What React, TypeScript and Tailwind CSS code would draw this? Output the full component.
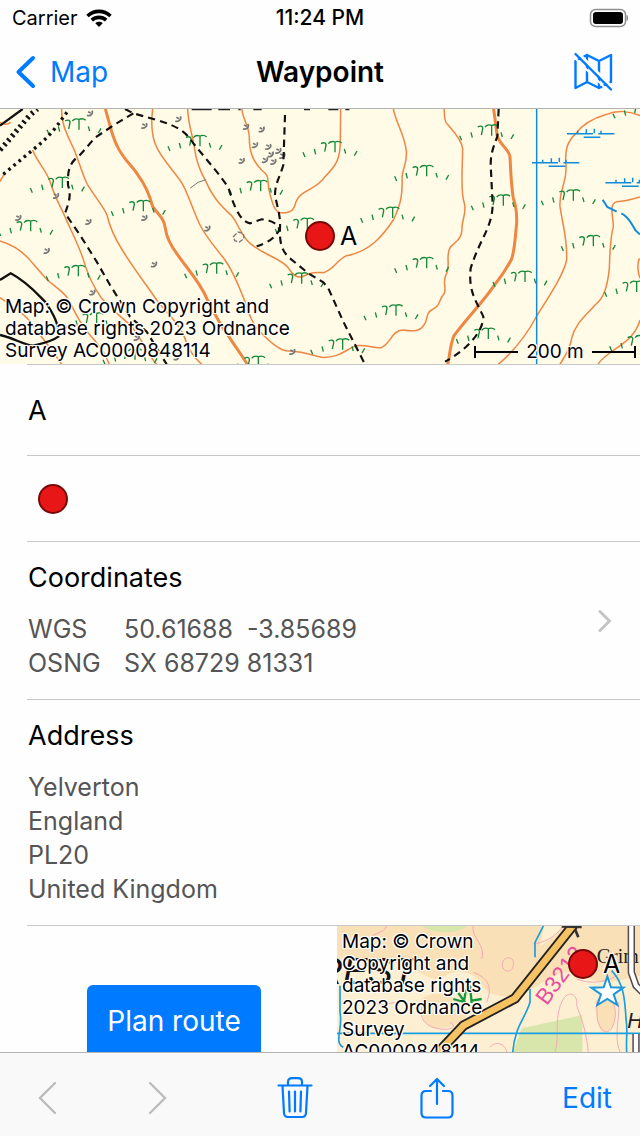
import type { ReactNode } from 'react'

const HALO =
  '[text-shadow:0_0_2px_#fff,0_0_2px_#fff,1px_1px_0_#fff,-1px_-1px_0_#fff,1px_-1px_0_#fff,-1px_1px_0_#fff]'

const contours = [
  'M185 12C183 60 205 95 225 140C240 180 250 215 262 238C285 275 310 305 321 330C330 370 345 400 365 432C400 490 440 540 470 585C500 625 545 660 560 715C570 740 590 765 605 778',
  'M98 135C110 170 140 195 152 235C165 280 185 310 197 340C215 380 235 420 247 455C260 500 275 540 305 580C335 615 370 640 392 662C420 690 440 745 470 778',
  'M0 408C40 420 75 445 98 475C115 495 130 512 142 525C165 545 190 560 203 580C225 620 235 645 255 672C280 705 305 720 328 778',
  'M0 578C30 600 70 620 90 650C120 690 160 740 185 778',
  'M458 12C452 60 458 95 465 115C480 160 530 205 548 238C570 280 580 320 600 360C620 400 645 425 675 465C700 500 715 540 732 582C745 620 752 650 780 680C810 710 840 740 870 738C920 740 930 750 965 757C1020 760 1040 730 1070 722C1100 718 1125 732 1143 728C1170 720 1175 675 1210 675C1240 680 1262 680 1275 655C1284 640 1278 622 1295 615C1325 600 1312 590 1333 565C1340 540 1325 530 1340 505C1352 480 1335 450 1352 425C1375 405 1388 395 1386 365C1388 340 1400 320 1393 295C1380 260 1388 180 1388 130C1382 95 1350 70 1338 52C1332 40 1334 25 1332 12',
  'M563 12C565 60 575 80 582 120C590 180 605 205 618 230C640 280 665 305 695 332C715 355 715 375 740 405C780 450 840 455 866 490C880 512 890 518 905 516C935 500 950 502 970 503C1000 495 1010 465 1040 452C1110 440 1150 390 1180 345C1205 295 1208 260 1206 215C1210 185 1222 170 1219 140C1215 90 1190 60 1180 12',
  'M725 12C730 50 748 60 748 100C748 150 765 175 785 195C812 215 800 225 808 260C818 300 825 320 840 323C875 325 882 315 888 290C900 255 950 255 975 215C1010 180 1022 160 1021 100L1022 12',
  'M1920 32C1890 18 1850 15 1820 28C1780 40 1750 55 1728 85C1700 110 1694 140 1698 180C1702 240 1676 250 1680 305C1690 370 1702 400 1700 465C1690 510 1650 570 1612 630C1580 690 1540 740 1495 778',
  'M1920 276C1890 285 1870 290 1850 290C1825 300 1840 330 1840 365C1830 400 1830 440 1828 490C1822 550 1810 580 1785 600C1760 630 1725 655 1715 700C1710 735 1690 760 1680 778',
  'M1918 460C1912 475 1912 500 1920 520',
  'M1920 645C1905 700 1860 720 1835 740C1815 755 1800 765 1795 778',
  'M0 52C12 60 22 60 32 52',
  'M0 230L12 208',
]

const indexContours = [
  'M316 12C328 50 333 85 350 120C370 165 400 185 415 212C440 245 450 275 458 305C480 335 492 340 496 370C500 400 515 425 530 445C560 490 600 530 620 580C640 620 660 660 690 700C710 730 728 755 742 778',
  'M1481 12L1492 95C1505 125 1528 135 1530 155C1532 200 1534 245 1540 280C1552 315 1550 330 1550 355C1545 400 1545 430 1535 462C1515 500 1500 520 1480 545C1450 590 1400 640 1362 692C1350 720 1350 750 1343 778',
]

const paths = [
  'M400 25L350 55L285 98L240 150C205 175 203 200 204 240C210 262 214 275 195 325L240 390L290 470L330 540L390 635L440 680L500 778',
  'M375 12L400 25L470 45C540 65 560 85 580 115L650 200C680 240 690 250 695 280C710 320 725 350 750 355L785 343C820 345 845 365 835 380C820 400 810 410 770 424',
  'M855 30L850 180C840 215 825 235 825 270C830 300 842 330 840 370C838 410 845 440 870 460L925 505L970 532L985 550L1030 650L1095 778',
  'M1496 12L1492 95C1478 130 1472 150 1472 180L1478 300C1476 370 1440 400 1412 490C1404 560 1430 590 1450 635C1450 680 1400 735 1335 770',
]

const bracken = [
  [237, 40], [187, 215], [430, 285], [600, 90], [92, 345], [235, 480], [650, 472], [290, 622], [405, 730],
  [782, 225], [1005, 108], [1178, 305], [922, 338], [1280, 180], [905, 502], [1280, 456], [1188, 598],
  [1028, 700], [775, 752], [1475, 58], [1510, 268], [1720, 253], [1780, 390], [1575, 497], [1465, 668],
  [1910, 527], [1925, 690], [1935, -8],
]

const rocks = [
  [270, 25], [535, 42], [433, 62], [168, 272], [55, 338], [265, 350], [433, 338], [140, 437], [462, 478],
  [622, 370], [277, 562], [410, 698], [530, 757], [738, 65], [785, 73], [765, 120], [805, 125], [725, 167],
  [795, 165], [835, 137], [812, 148], [820, 170], [847, 152], [877, 740],
]

const marsh = [
  [1751, 83], [1646, 170], [1866, 230],
]

function MainMap() {
  return (
    <svg viewBox="0 12 1920 765" preserveAspectRatio="xMidYMid slice" className="block h-full w-full" fill="none" aria-hidden="true">
      <rect y="12" width="1920" height="765" fill="#fffbe6" />

      {/* heading cut off by the upper edge */}
      <path d="M575 13H635M655 13H690M715 13H722M760 13H785M912 13H930M985 13H1015M1036 13H1048" stroke="#222" strokeWidth="5" />

      <g stroke="#ee8644" strokeWidth="4.5">
        {contours.map((d) => <path key={d} d={d} />)}
      </g>
      <g stroke="#ee8644" strokeWidth="9">
        {indexContours.map((d) => <path key={d} d={d} />)}
      </g>

      {bracken.map(([x, y]) => (
        <g key={`${x}-${y}`} transform={`translate(${x} ${y})`} stroke="#15893a" strokeWidth="4">
          <path d="M-20 8C-14 0 -8 0 0 3C8 0 14 0 20 6M0 2V34M-42 8C-32 2 -24 6 -28 18L-31 32M-62 24L-58 40M-96 34L-90 48M28 24L32 38M66 30L58 44" />
        </g>
      ))}
      {rocks.map(([x, y]) => (
        <path key={`${x}-${y}`} d={`M${x - 9} ${y + 6}c8 4 20 -4 15 -14m-12 3l8 4`} stroke="#777" strokeWidth="5" />
      ))}
      <path d="M700 395l14 -14 16 4 2 16 -14 10 -14 -4z" stroke="#777" strokeWidth="4" strokeDasharray="14 5" />
      <path d="M570 250l24 -18 24 -8" stroke="#777" strokeWidth="3" />

      {/* watercourses and grid line */}
      <g stroke="#0d8cdc" strokeWidth="4.5">
        <path d="M1610 12V778" />
        {marsh.map(([x, y]) => (
          <path key={`${x}-${y}`} d={`M${x - 50} ${y + 3}H${x + 28}M${x + 44} ${y + 3}H${x + 92}M${x} ${y + 14}H${x + 50}M${x - 18} ${y + 2}v-8M${x + 8} ${y + 2}v-12M${x + 32} ${y + 2}v-14M${x + 52} ${y + 2}v-8`} />
        ))}
        <path d="M1808 284L1822 306L1850 320M1864 325C1885 335 1890 350 1900 365C1905 378 1912 382 1920 388" strokeWidth="6" />
      </g>

      <g stroke="#111" strokeWidth="6.5" strokeDasharray="22 15">
        {paths.map((d) => <path key={d} d={d} />)}
      </g>
      <g stroke="#111" strokeWidth="7">
        <path d="M0 62L68 12" />
        <path d="M0 525L32 505C80 530 110 565 135 590C160 625 180 660 175 695C155 710 130 715 100 722C70 720 45 700 0 690" />
      </g>
      <path d="M0 135C40 90 60 65 90 30L112 12" stroke="#111" strokeWidth="16" strokeDasharray="7 11" />
      <path d="M10 208L98 135C130 110 160 80 180 50L208 12" stroke="#111" strokeWidth="10" strokeDasharray="8 12" />
    </svg>
  )
}

function OverviewMap() {
  return (
    <svg viewBox="21 21 909 570" preserveAspectRatio="xMaxYMin slice" className="block h-full w-full" fill="none" aria-hidden="true">
      <rect x="21" y="21" width="909" height="570" fill="#fdf0d2" />
      <path d="M21 21H640C640 60 620 90 640 75C665 60 690 40 700 21H930V170C880 180 830 200 780 180C740 150 700 150 640 190L560 235C500 230 470 230 450 190C420 150 370 150 340 175C300 200 240 130 190 120L21 120Z" fill="#fae0b6" />
      <path d="M275 240C300 215 370 220 400 260C440 300 360 330 320 328C280 320 270 290 285 270ZM800 240C830 220 860 245 856 290C854 325 830 350 812 335C798 300 792 270 800 240Z" fill="#fae0b6" />
      <path d="M275 21H410C380 48 310 44 275 21ZM575 328L757 288V400H548Z" fill="#d8e6ab" />
      <g stroke="#f6a9b9" strokeWidth="3">
        <path d="M170 21C160 45 130 40 120 60M430 21C420 50 470 80 455 120M130 250C160 270 190 240 210 255M280 250C260 300 290 325 330 330C370 335 380 320 360 310M430 160C470 175 490 200 470 250" />
        <path d="M610 75C640 70 670 60 700 21M675 400C690 350 670 290 700 240C720 210 745 230 740 260C760 310 770 350 775 400M800 255C800 225 860 225 856 290C850 350 815 355 802 300ZM740 180C790 200 850 185 870 160M870 400C850 350 870 300 866 250" />
        <path d="M520 125C530 110 550 115 550 130C552 150 540 160 528 155C515 150 515 135 520 125ZM480 385C500 360 530 380 530 400" />
      </g>
      <g stroke="#199ee0" strokeWidth="5">
        <path d="M21 343H930M640 21L615 70V115M600 210V250C585 300 555 320 548 400M845 155C880 190 885 240 888 300C895 340 885 370 892 420M30 200V280C40 330 10 370 40 385" />
      </g>

      <text x="-42" y="194" fontSize="112" fill="#111" className="font-['Liberation_Sans',sans-serif] italic">REST</text>

      <path d="M735 12L555 238L400 320L325 400" stroke="#222" strokeWidth="31" />
      <path d="M735 12L555 238L400 320L325 400" stroke="#f6c263" strokeWidth="20" />
      <path d="M695 22L755 24M735 30L745 55" stroke="#333" strokeWidth="8" />

      <path d="M370 240L405 250L385 222M400 258L408 212M425 252L420 200M425 245L455 240" stroke="#119a3e" strokeWidth="7" />

      <text transform="translate(650 262) rotate(-54)" fontSize="68" fill="#e84ea0" className="font-['Liberation_Sans',sans-serif]">B3212</text>
      <text x="800" y="132" fontSize="60" fill="#222" className="font-['Liberation_Serif',serif]">Grim</text>
      <text x="892" y="328" fontSize="64" fill="#222" className="font-['Liberation_Sans',sans-serif] italic">H</text>

      {/* double track on the right edge */}
      <path d="M904 21V160L918 200L940 222M918 345V420" stroke="#554a52" strokeWidth="22" />
      <path d="M904 21V160L918 200L940 222M918 345V420" stroke="#fff" strokeWidth="13" />

      <path d="M832 172L843 205L880 206L851 226L862 258L832 240L802 258L813 226L784 206L821 205Z" fill="#fff" stroke="#1c97dc" strokeWidth="6" />
    </svg>
  )
}

function Dot() {
  return <span className="block size-[30px] rounded-full border-2 border-[#780808] bg-[#e81616]" />
}

function Pin({ label, className }: { label: string; className: string }) {
  return (
    <div className={`absolute flex items-center gap-[5px] ${className}`}>
      <Dot />
      <span className={`text-[25px]/[30px] ${HALO}`}>{label}</span>
    </div>
  )
}

function Copyright({ className = '' }: { className?: string }) {
  return (
    <p className={`absolute left-[5px] text-[19px]/[22px] ${HALO} ${className}`}>
      Map: © Crown Copyright and database rights 2023 Ordnance Survey AC0000848114
    </p>
  )
}

function ScaleBar() {
  return (
    <div className="absolute right-1 bottom-0 flex h-6 w-[162px] items-center gap-2">
      <span className="h-3 w-0.5 bg-black" />
      <span className="-ml-2 h-0.5 flex-1 bg-black" />
      <span className={`text-[19px]/6 ${HALO}`}>200 m</span>
      <span className="-mr-2 h-0.5 flex-1 bg-black" />
      <span className="h-3 w-0.5 bg-black" />
    </div>
  )
}

function Row({ title, children }: { title: string; children: ReactNode }) {
  return (
    <section className="ml-[27px] border-b border-[#c8c8ca] py-[19px] pl-px">
      <h2 className="mb-[17px] text-[27px]/[34px]">{title}</h2>
      {children}
    </section>
  )
}

function StatusBar() {
  return (
    <div className="grid h-9 grid-cols-[1fr_auto_1fr] items-center px-3 text-xl">
      <div className="flex items-center gap-2">
        <span>Carrier</span>
        <svg viewBox="0 0 26 18" className="h-[18px] w-[26px]" fill="none" stroke="#000" strokeWidth="3.6" aria-hidden="true">
          <path d="M1.5 7C8 0.8 18 0.8 24.5 7" />
          <path d="M5.8 11.2C10 7.4 16 7.4 20.2 11.2" />
          <path d="M13 18L9.3 14.2C11.4 12.4 14.6 12.4 16.7 14.2Z" fill="#000" stroke="none" />
        </svg>
      </div>
      <span className="text-[21px] font-medium">11:24 PM</span>
      <svg viewBox="0 0 42 20" className="h-5 w-[42px] justify-self-end" fill="none" aria-hidden="true">
        <rect x="4.5" y="1.5" width="35" height="17" rx="5" stroke="#8e8e8e" strokeWidth="1.5" />
        <rect x="7" y="4" width="30" height="12" rx="3" fill="#000" />
        <path d="M41 7.5C42 9 42 11 41 12.5Z" fill="#8e8e8e" stroke="#8e8e8e" />
      </svg>
    </div>
  )
}

function Toolbar() {
  return (
    <nav className="flex h-[84px] shrink-0 items-center justify-between border-t border-[#b3b3b3] bg-[#f9f9f9] pt-1.5 pr-7 pl-[35px] text-[#007aff]">
      <div className="flex gap-[86px] text-[#bcbcbc]">
        <button disabled aria-label="Previous">
          <svg viewBox="0 0 24 34" className="h-[34px] w-6" fill="none" stroke="currentColor" strokeWidth="2.4" strokeLinecap="round" aria-hidden="true">
            <path d="M20 2L5 17L20 32" />
          </svg>
        </button>
        <button disabled aria-label="Next">
          <svg viewBox="0 0 24 34" className="h-[34px] w-6" fill="none" stroke="currentColor" strokeWidth="2.4" strokeLinecap="round" aria-hidden="true">
            <path d="M5 2L20 17L5 32" />
          </svg>
        </button>
      </div>
      <button aria-label="Delete">
        <svg viewBox="0 0 36 42" className="h-[42px] w-9" fill="none" stroke="currentColor" strokeWidth="2.2" strokeLinecap="round" strokeLinejoin="round" aria-hidden="true">
          <path d="M1.5 8.5H34.5M5.5 9L7 36C7.2 39 8.5 40 11 40H25C27.5 40 28.8 39 29 36L30.5 9" />
          <path d="M11 8V5C11 2.5 12.5 1.2 15 1.2H21C23.5 1.2 25 2.5 25 5V8" />
          <path d="M12 14.5L12.6 34.5M18 14.5V34.5M24 14.5L23.4 34.5" />
        </svg>
      </button>
      <button aria-label="Share">
        <svg viewBox="0 0 34 42" className="h-[42px] w-[34px]" fill="none" stroke="currentColor" strokeWidth="2.2" strokeLinecap="round" strokeLinejoin="round" aria-hidden="true">
          <path d="M11 14H6C3 14 1.5 15.5 1.5 18.5V36C1.5 39 3 40.5 6 40.5H28C31 40.5 32.5 39 32.5 36V18.5C32.5 15.5 31 14 28 14H23" />
          <path d="M17 27V2.5M10 9L17 2L24 9" />
        </svg>
      </button>
      <button className="text-[28px]">Edit</button>
    </nav>
  )
}

const address = ['Yelverton', 'England', 'PL20', 'United Kingdom']

export default function App() {
  return (
    <div className="flex h-screen flex-col overflow-hidden bg-[#fefefe] font-['Inter',sans-serif] text-black">
      <header className="shrink-0 border-b border-[#b3b3b3]">
        <StatusBar />
        <div className="grid h-[72px] grid-cols-[1fr_auto_1fr] items-center px-[15px]">
          <button className="flex items-center gap-[14px] justify-self-start text-[28px] text-[#007aff]">
            <svg viewBox="0 0 21 34" className="h-[34px] w-[21px]" fill="none" stroke="currentColor" strokeWidth="4" strokeLinecap="round" strokeLinejoin="round" aria-hidden="true">
              <path d="M18 3L3.5 17L18 31" />
            </svg>
            Map
          </button>
          <h1 className="text-[28px] font-semibold">Waypoint</h1>
          <button aria-label="Hide map" className="mr-3 justify-self-end text-[#007aff]">
            <svg viewBox="0 0 40 40" className="size-10" fill="none" stroke="currentColor" strokeWidth="2.4" strokeLinecap="round" strokeLinejoin="round" aria-hidden="true">
              <path d="M2.5 36V9L14 3L26 9L38 3V30L26 36L14 30ZM14 3V30M26 9V36" />
              <path d="M4.5 0.5L40.5 36.5" stroke="#fefefe" strokeWidth="3" />
              <path d="M0.5 4.5L35.5 39.5" stroke="#fefefe" strokeWidth="2" />
              <path d="M2.5 2L38 37.5" />
            </svg>
          </button>
        </div>
      </header>

      <main className="min-h-0 flex-1 overflow-hidden">
        <div className="relative h-[255px] overflow-hidden">
          <MainMap />
          <Pin label="A" className="top-[112px] left-[305px]" />
          <Copyright className="bottom-0.5 w-[300px]" />
          <ScaleBar />
        </div>

        <div className="ml-[27px] flex h-[92px] items-center border-y border-[#c8c8ca] pt-0.5 pl-px text-[27px]">A</div>
        <div className="ml-[27px] flex h-[86px] items-center border-b border-[#c8c8ca] pl-[11px]">
          <Dot />
        </div>

        <div className="relative">
          <Row title="Coordinates">
            <dl className="grid grid-cols-[96px_1fr] text-[25px]/[34px] text-[#555]">
              <dt>WGS</dt>
              <dd className="whitespace-pre">50.61688{'  '}-3.85689</dd>
              <dt>OSNG</dt>
              <dd>SX 68729 81331</dd>
            </dl>
          </Row>
          <button aria-label="Show coordinates" className="absolute inset-0 flex items-center justify-end pr-7">
            <svg viewBox="0 0 14 24" className="h-6 w-[14px]" fill="none" stroke="#c4c4c6" strokeWidth="3" strokeLinecap="round" strokeLinejoin="round" aria-hidden="true">
              <path d="M2 2.5L11.5 12L2 21.5" />
            </svg>
          </button>
        </div>

        <Row title="Address">
          <address className="text-[25px]/[34px] text-[#555] not-italic">
            {address.map((line) => (
              <div key={line}>{line}</div>
            ))}
          </address>
        </Row>

        <div className="flex h-[190px]">
          <div className="flex flex-1 items-center justify-center pl-[11px]">
            <button className="h-[73px] rounded-md bg-[#007aff] px-5 text-[28px] text-white">Plan route</button>
          </div>
          <div className="relative w-[303px] overflow-hidden">
            <OverviewMap />
            <Pin label="A" className="top-[23px] left-[231px]" />
            <Copyright className="top-[5px] w-[152px]" />
          </div>
        </div>
      </main>

      <Toolbar />
    </div>
  )
}
